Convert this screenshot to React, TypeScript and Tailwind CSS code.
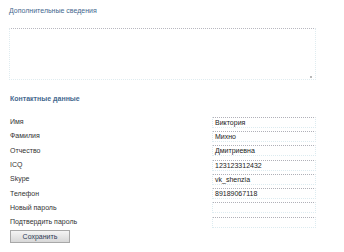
import React from "react";

const rows: [string, string][] = [
  ["Имя", "Виктория"],
  ["Фамилия", "Михно"],
  ["Отчество", "Дмитриевна"],
  ["ICQ", "123123312432"],
  ["Skype", "vk_shenzia"],
  ["Телефон", "89189067118"],
  ["Новый пароль", ""],
  ["Подтвердить пароль", ""],
];

export default function App() {
  return (
    <div className="w-[344px] h-[252px] bg-white overflow-hidden font-['Liberation_Sans',Arial,sans-serif] text-[7px] leading-[8px] text-[#333]">
      <div className="pl-[9px] pt-[7px] w-[316px]">
        <div className="text-[#45688e] h-[8px]">Дополнительные сведения</div>
        <div className="mt-[13px] relative w-[307px] h-[52px] border-t border-t-[#b8b8c0] border-x border-b border-dotted border-x-[#dfecf0] border-b-[#dfecf0] bg-white">
          <div className="absolute right-[3px] bottom-[1px] w-[2px] h-[2px] bg-[#b8b8b8]" />
        </div>
        <div className="mt-[15px] pl-px font-semibold text-[#45688e] h-[8px]">Контактные данные</div>
        <div className="mt-[12px] flex flex-col">
          {rows.map(([label, value], i) => (
            <div key={i} className="flex items-center h-[14.3px]">
              <div className="w-[203px] pl-px">{label}</div>
              <div className="w-[104px] h-[11px] border-t border-t-[#b0b0b8] border-x border-b border-dotted border-x-[#dcebf0] border-b-[#dcebf0] px-[2px] flex items-center text-[#222] leading-[9px]">
                {value}
              </div>
            </div>
          ))}
        </div>
        <button className="mt-px ml-px w-[60px] h-[13px] border border-[#a8a8a8] bg-gradient-to-b from-[#f4f4f4] to-[#d8d8d8] text-[7px] leading-[8px] text-[#2b3a55] flex items-center justify-center font-['Liberation_Sans',Arial,sans-serif]">
          Сохранить
        </button>
      </div>
    </div>
  );
}
